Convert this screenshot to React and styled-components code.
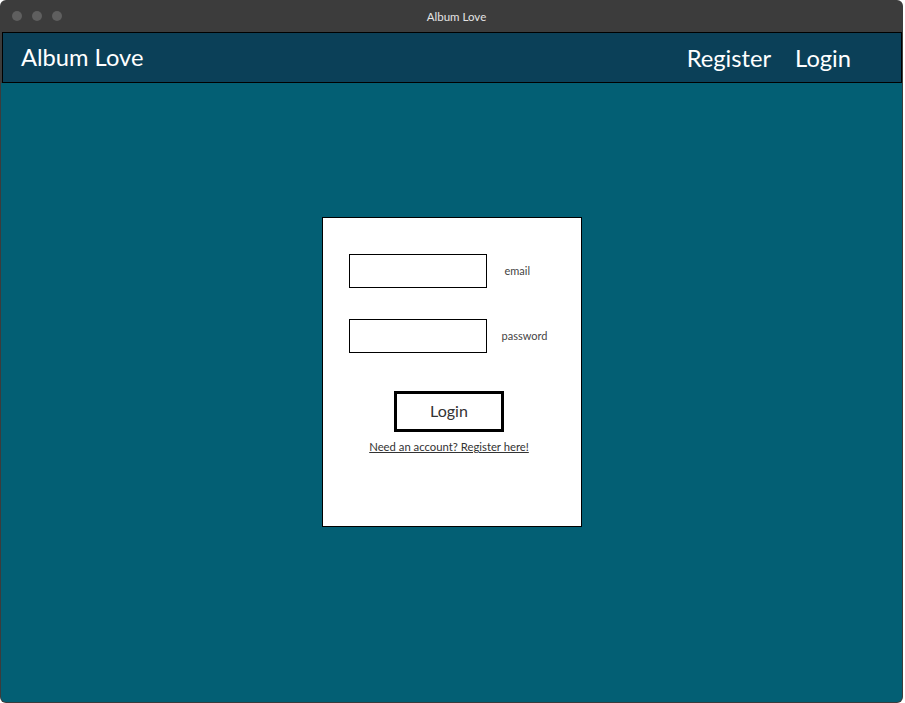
import React from "react";
import styled, { createGlobalStyle } from "styled-components";

const GlobalStyle = createGlobalStyle`
  html, body {
    margin: 0;
    padding: 0;
    background: #fff;
  }
  body {
    font-family: "Lato", "Noto Sans", sans-serif;
  }
`;

const Window = styled.div`
  width: 903px;
  height: 703px;
  box-sizing: border-box;
  display: flex;
  flex-direction: column;
  background-color: #3c3c3c;
  border-radius: 6px;
  overflow: hidden;
  padding: 0 1px 1px 1px;
`;

const TitleBar = styled.div`
  position: relative;
  height: 32px;
  flex: none;
  display: flex;
  align-items: center;
  justify-content: center;
  padding-left: 10px;
  color: #e4e4e4;
  font-family: "Lato", sans-serif;
  font-size: 11.5px;

  .dots {
    position: absolute;
    left: 11px;
    top: 11px;
    display: flex;
    gap: 10px;
  }
`;

const Dot = styled.span`
  width: 10px;
  height: 10px;
  border-radius: 50%;
  background-color: #5f5f5f;
`;

const Nav = styled.nav`
  flex: none;
  height: 51px;
  box-sizing: border-box;
  margin-left: 1px;
  border: 1px solid #000;
  background-color: #0b4058;
  display: flex;
  align-items: center;
  justify-content: space-between;
  padding: 0 50px 0 18px;
  color: #fff;

  .brand {
    font-size: 23.7px;
    margin-top: -2px;
  }
  .links {
    display: flex;
    gap: 24px;
    a {
      color: #fff;
      text-decoration: none;
      font-size: 23.7px;
    }
  }
`;

const Main = styled.main`
  flex: 1;
  background-color: #035f74;
  border-radius: 0 0 5px 5px;
  display: flex;
  justify-content: center;
  align-items: flex-start;
  padding-top: 134px;
`;

const Card = styled.form`
  width: 260px;
  height: 310px;
  box-sizing: border-box;
  background-color: #fff;
  border: 1px solid #000;
  display: flex;
  flex-direction: column;
  padding: 36px 0 0 26px;
`;

const FieldRow = styled.div`
  display: flex;
  align-items: center;
  gap: ${(props) => props.gap}px;
  margin-bottom: ${(props) => props.bottom}px;

  input {
    width: 138px;
    height: 34px;
    box-sizing: border-box;
    border: 1px solid #000;
    outline: none;
    margin: 0;
  }
  label {
    font-size: 11px;
    color: #444;
    margin-top: -2px;
  }
`;

const Actions = styled.div`
  display: flex;
  flex-direction: column;
  align-items: center;
  margin-left: -31px;

  button {
    width: 110px;
    height: 41px;
    box-sizing: border-box;
    border: 3px solid #000;
    background-color: #fff;
    color: #333;
    font-family: "Lato", sans-serif;
    font-size: 16px;
    padding: 0 0 3px 0;
  }
  a {
    margin-top: 8px;
    font-size: 11.3px;
    color: #333;
    text-decoration: underline;
  }
`;

export default function App() {
  return (
    <>
      <GlobalStyle />
      <Window>
        <TitleBar>
          <div className="dots">
            <Dot />
            <Dot />
            <Dot />
          </div>
          Album Love
        </TitleBar>
        <Nav>
          <span className="brand">Album Love</span>
          <div className="links">
            <a href="#">Register</a>
            <a href="#">Login</a>
          </div>
        </Nav>
        <Main>
          <Card onSubmit={(e) => e.preventDefault()}>
            <FieldRow gap={18} bottom={31}>
              <input type="email" />
              <label>email</label>
            </FieldRow>
            <FieldRow gap={15} bottom={38}>
              <input type="password" />
              <label>password</label>
            </FieldRow>
            <Actions>
              <button type="submit">Login</button>
              <a href="#">Need an account? Register here!</a>
            </Actions>
          </Card>
        </Main>
      </Window>
    </>
  );
}
